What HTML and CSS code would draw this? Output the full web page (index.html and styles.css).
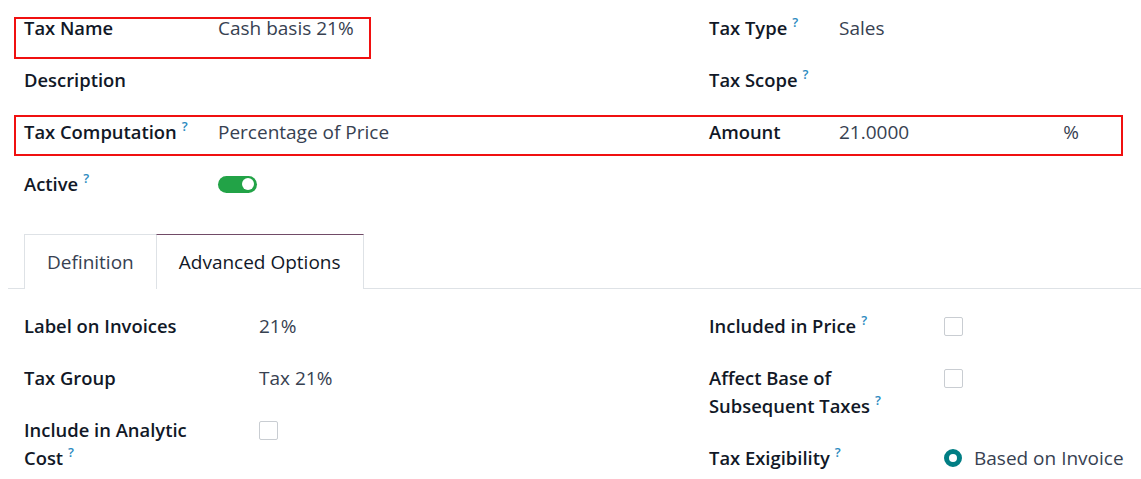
FILE: index.html
```html
<!DOCTYPE html>
<html>
<head>
<meta charset="utf-8">
<link rel="stylesheet" href="styles.css">
</head>
<body>
<div class="sheet">
  <div class="group top">
    <div class="col col-left">
      <div class="row"><div class="label">Tax Name</div><div class="value">Cash basis 21%</div></div>
      <div class="row"><div class="label">Description</div><div class="value"></div></div>
      <div class="row"><div class="label">Tax Computation<sup>?</sup></div><div class="value">Percentage of Price</div></div>
      <div class="row"><div class="label">Active<sup>?</sup></div><div class="value"><span class="toggle"><span class="knob"></span></span></div></div>
    </div>
    <div class="col col-right">
      <div class="row"><div class="label">Tax Type<sup>?</sup></div><div class="value">Sales</div></div>
      <div class="row"><div class="label">Tax Scope<sup>?</sup></div><div class="value"></div></div>
      <div class="row"><div class="label">Amount</div><div class="value amount"><span>21.0000</span><span class="pct">%</span></div></div>
    </div>
    <div class="mark mark-name"></div>
    <div class="mark mark-comp"></div>
  </div>

  <div class="tabs">
    <div class="tab">Definition</div>
    <div class="tab active">Advanced Options</div>
  </div>

  <div class="group bottom">
    <div class="col col-left">
      <div class="row"><div class="label">Label on Invoices</div><div class="value">21%</div></div>
      <div class="row"><div class="label">Tax Group</div><div class="value">Tax 21%</div></div>
      <div class="row"><div class="label">Include in Analytic Cost<sup>?</sup></div><div class="value"><span class="check"></span></div></div>
    </div>
    <div class="col col-right">
      <div class="row"><div class="label">Included in Price<sup>?</sup></div><div class="value"><span class="check"></span></div></div>
      <div class="row"><div class="label">Affect Base of Subsequent Taxes<sup>?</sup></div><div class="value"><span class="check"></span></div></div>
      <div class="row"><div class="label">Tax Exigibility<sup>?</sup></div><div class="value radio-wrap"><span class="radio"></span><span>Based on Invoice</span></div></div>
    </div>
  </div>
</div>
</body>
</html>
```

FILE: styles.css
```css
html, body {
  margin: 0;
  padding: 0;
  background: #ffffff;
}
body {
  font-family: "Open Sans", "Noto Sans", sans-serif;
  font-size: 19px;
  color: #374151;
}
.sheet {
  padding-left: 8px;
  width: 1133px;
}
.group {
  display: grid;
  grid-template-columns: 661px 424px;
  column-gap: 24px;
  padding-left: 16px;
  position: relative;
}
.group.top {
  padding-top: 2px;
}
.group.bottom {
  padding-top: 11px;
}
.col {
  display: flex;
  flex-direction: column;
}
.row {
  display: flex;
  align-items: flex-start;
  padding: 12px 0;
  line-height: 28px;
}
.label {
  font-weight: 600;
  font-size: 18.4px;
  color: #111827;
  flex: none;
  box-sizing: border-box;
}
.col-left .label { width: 194px; }
.col-right .label { width: 130px; }
.bottom .label {
  width: 235px;
  padding-right: 45px;
  line-height: 28px;
}
.value {
  flex: 1;
  min-height: 28px;
  display: flex;
  align-items: center;
  white-space: nowrap;
}
sup {
  font-size: 13px;
  font-weight: 600;
  color: #2b8ac0;
  vertical-align: baseline;
  position: relative;
  top: -8px;
  line-height: 0;
  margin-left: 5px;
}
.amount {
  justify-content: space-between;
  padding-right: 54px;
}
.toggle {
  display: inline-flex;
  align-items: center;
  justify-content: flex-end;
  width: 39px;
  height: 17px;
  border-radius: 9px;
  background: #22a347;
  padding: 0 3px;
  box-sizing: border-box;
}
.knob {
  width: 12px;
  height: 12px;
  border-radius: 50%;
  background: #ffffff;
}
.check {
  display: inline-block;
  width: 17px;
  height: 17px;
  border: 1px solid #c9cdd2;
  border-radius: 2px;
  background: #fff;
}
.radio-wrap {
  gap: 12px;
}
.radio {
  display: inline-block;
  flex: none;
  width: 18px;
  height: 18px;
  border-radius: 50%;
  border: 5px solid #017e84;
  box-sizing: border-box;
  background: #fff;
}
.tabs {
  display: flex;
  margin-top: 24px;
  padding-left: 16px;
  border-bottom: 1px solid #dee2e6;
  height: 54px;
}
.tab {
  padding: 0 22px;
  display: flex;
  align-items: center;
  border: 1px solid #dee2e6;
  border-bottom: none;
  color: #374151;
  margin-bottom: -1px;
  background: #fff;
}
.tab + .tab { margin-left: -1px; }
.tab.active {
  border-top-color: #714b67;
  color: #111827;
  height: 55px;
  box-sizing: border-box;
}
.mark {
  position: absolute;
  border: 2px solid #f01010;
  box-sizing: border-box;
  pointer-events: none;
}
.mark-name {
  left: 6px;
  top: 17px;
  width: 357px;
  height: 42px;
}
.mark-comp {
  left: 6px;
  top: 115px;
  width: 1109px;
  height: 41px;
}
```
